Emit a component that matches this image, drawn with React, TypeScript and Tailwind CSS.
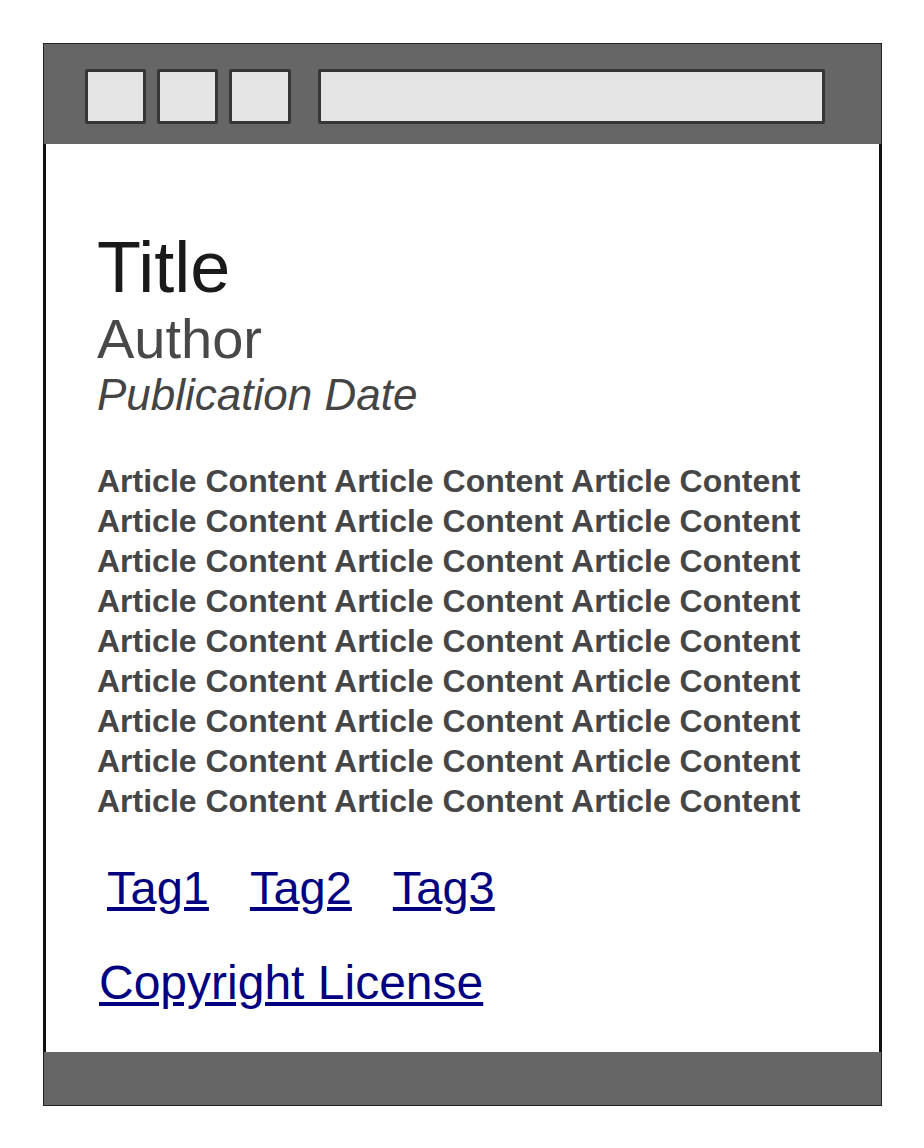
import React from "react";

const font = { fontFamily: '"Liberation Sans", Arial, Helvetica, sans-serif' };

export default function App() {
  const lines = Array.from({ length: 9 });
  return (
    <div className="w-[924px] h-[1148px] bg-white pt-[43px] pl-[43px]" style={font}>
      <div className="w-[839px] flex flex-col">
        {/* top browser bar */}
        <div className="h-[101px] bg-[#666666] border border-b-0 border-[#222222] flex items-start pt-[25px] pl-[41px]">
          <div className="w-[61px] h-[55px] bg-[#e5e5e5] border-[3px] border-[#363636] rounded-[2px]" />
          <div className="w-[61px] h-[55px] bg-[#e5e5e5] border-[3px] border-[#363636] rounded-[2px] ml-[11px]" />
          <div className="w-[62px] h-[55px] bg-[#e5e5e5] border-[3px] border-[#363636] rounded-[2px] ml-[11px]" />
          <div className="w-[507px] h-[55px] bg-[#e5e5e5] border-[3px] border-[#363636] rounded-[2px] ml-[27px]" />
        </div>
        {/* content */}
        <div className="h-[908px] bg-white border-x-[3px] border-[#111111] pl-[51px] pt-[87px] flex flex-col items-start">
          <div className="text-[72px] leading-[72px] text-[#1a1a1a]">Title</div>
          <div className="text-[56px] leading-[56px] text-[#484848] mt-[8px]">Author</div>
          <div className="text-[44px] leading-[44px] italic text-[#444444] mt-[6px]">Publication Date</div>
          <div className="mt-[44px] text-[32px] leading-[40px] font-bold text-[#464646] whitespace-nowrap">
            {lines.map((_, i) => (
              <div key={i}>Article Content Article Content Article Content</div>
            ))}
          </div>
          <div className="mt-[43px] ml-[10px] flex gap-[41px] text-[47px] leading-[48px]">
            <a href="#" className="text-[#000080] underline">Tag1</a>
            <a href="#" className="text-[#000080] underline">Tag2</a>
            <a href="#" className="text-[#000080] underline">Tag3</a>
          </div>
          <a href="#" className="mt-[47px] ml-[2px] text-[48px] leading-[48px] text-[#000080] underline">
            Copyright License
          </a>
        </div>
        {/* bottom bar */}
        <div className="h-[54px] bg-[#666666] border border-t-0 border-[#222222]" />
      </div>
    </div>
  );
}
